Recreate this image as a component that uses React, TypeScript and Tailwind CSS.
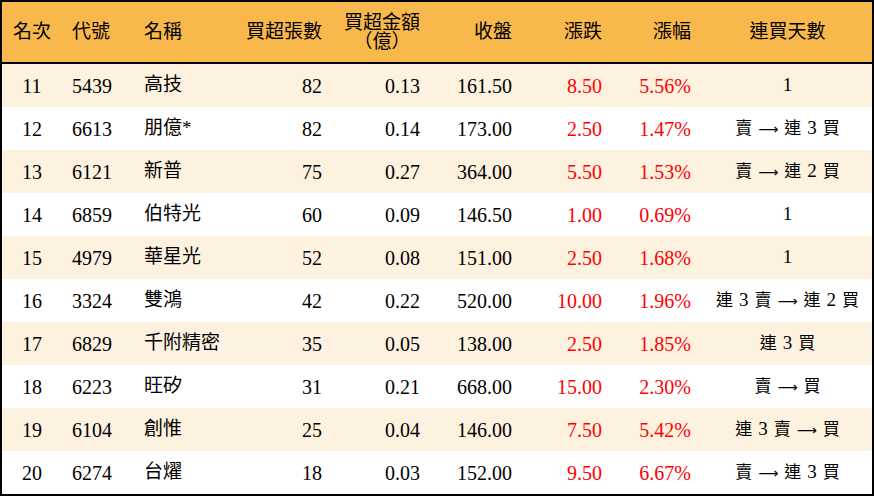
const rows = [
  { rank: 11, code: "5439", name: "高技", vol: 82, amt: "0.13", close: "161.50", chg: "8.50", pct: "5.56%", streak: "1" },
  { rank: 12, code: "6613", name: "朋億*", vol: 82, amt: "0.14", close: "173.00", chg: "2.50", pct: "1.47%", streak: "賣 → 連 3 買" },
  { rank: 13, code: "6121", name: "新普", vol: 75, amt: "0.27", close: "364.00", chg: "5.50", pct: "1.53%", streak: "賣 → 連 2 買" },
  { rank: 14, code: "6859", name: "伯特光", vol: 60, amt: "0.09", close: "146.50", chg: "1.00", pct: "0.69%", streak: "1" },
  { rank: 15, code: "4979", name: "華星光", vol: 52, amt: "0.08", close: "151.00", chg: "2.50", pct: "1.68%", streak: "1" },
  { rank: 16, code: "3324", name: "雙鴻", vol: 42, amt: "0.22", close: "520.00", chg: "10.00", pct: "1.96%", streak: "連 3 賣 → 連 2 買" },
  { rank: 17, code: "6829", name: "千附精密", vol: 35, amt: "0.05", close: "138.00", chg: "2.50", pct: "1.85%", streak: "連 3 買" },
  { rank: 18, code: "6223", name: "旺矽", vol: 31, amt: "0.21", close: "668.00", chg: "15.00", pct: "2.30%", streak: "賣 → 買" },
  { rank: 19, code: "6104", name: "創惟", vol: 25, amt: "0.04", close: "146.00", chg: "7.50", pct: "5.42%", streak: "連 3 賣 → 買" },
  { rank: 20, code: "6274", name: "台燿", vol: 18, amt: "0.03", close: "152.00", chg: "9.50", pct: "6.67%", streak: "賣 → 連 3 買" },
];

const cols = "grid grid-cols-[60px_66px_104px_98px_98px_92px_90px_93px_169px]";

function Streak({ text }: { text: string }) {
  return (
    <div className="flex justify-center items-center gap-[6px] text-[17px]">
      {text.split(" ").map((t, j) =>
        t === "→" ? (
          <span key={j} className="text-[14px] leading-none" style={{ fontFamily: '"DejaVu Sans", sans-serif' }}>
            ⟶
          </span>
        ) : (
          <span key={j} className={/\d/.test(t) ? "text-[19px]" : ""}>
            {t}
          </span>
        )
      )}
    </div>
  );
}

export default function App() {
  return (
    <div
      className="w-[874px] h-[496px] border-2 border-black bg-white text-black"
      style={{ fontFamily: '"Liberation Serif", "Noto Sans CJK TC", serif' }}
    >
      <div className={`${cols} h-[62px] bg-[#F9B84C] border-b-2 border-black items-center text-[19px]`}>
        <div className="text-center">名次</div>
        <div className="pl-[10px]">代號</div>
        <div className="pl-[16px]">名稱</div>
        <div className="text-right pr-[8px]">買超張數</div>
        <div className="text-right pr-[8px]">
          <div className="inline-block text-center leading-[19px] pt-[5px]">
            <div>買超金額</div>
            <div>（億）</div>
          </div>
        </div>
        <div className="text-right pr-[8px]">收盤</div>
        <div className="text-right pr-[8px]">漲跌</div>
        <div className="text-right pr-[12px]">漲幅</div>
        <div className="text-center">連買天數</div>
      </div>

      {rows.map((r, i) => (
        <div
          key={r.rank}
          className={`${cols} h-[43px] items-center text-[20px] ${i % 2 === 0 ? "bg-[#FDF2DF]" : "bg-white"}`}
        >
          <div className="text-center">{r.rank}</div>
          <div className="pl-[10px]">{r.code}</div>
          <div className="pl-[16px] text-[19px]">{r.name}</div>
          <div className="text-right pr-[8px]">{r.vol}</div>
          <div className="text-right pr-[8px]">{r.amt}</div>
          <div className="text-right pr-[8px]">{r.close}</div>
          <div className="text-right pr-[8px] text-[#FF0000]">{r.chg}</div>
          <div className="text-right pr-[12px] text-[#FF0000]">{r.pct}</div>
          <Streak text={r.streak} />
        </div>
      ))}
    </div>
  );
}
